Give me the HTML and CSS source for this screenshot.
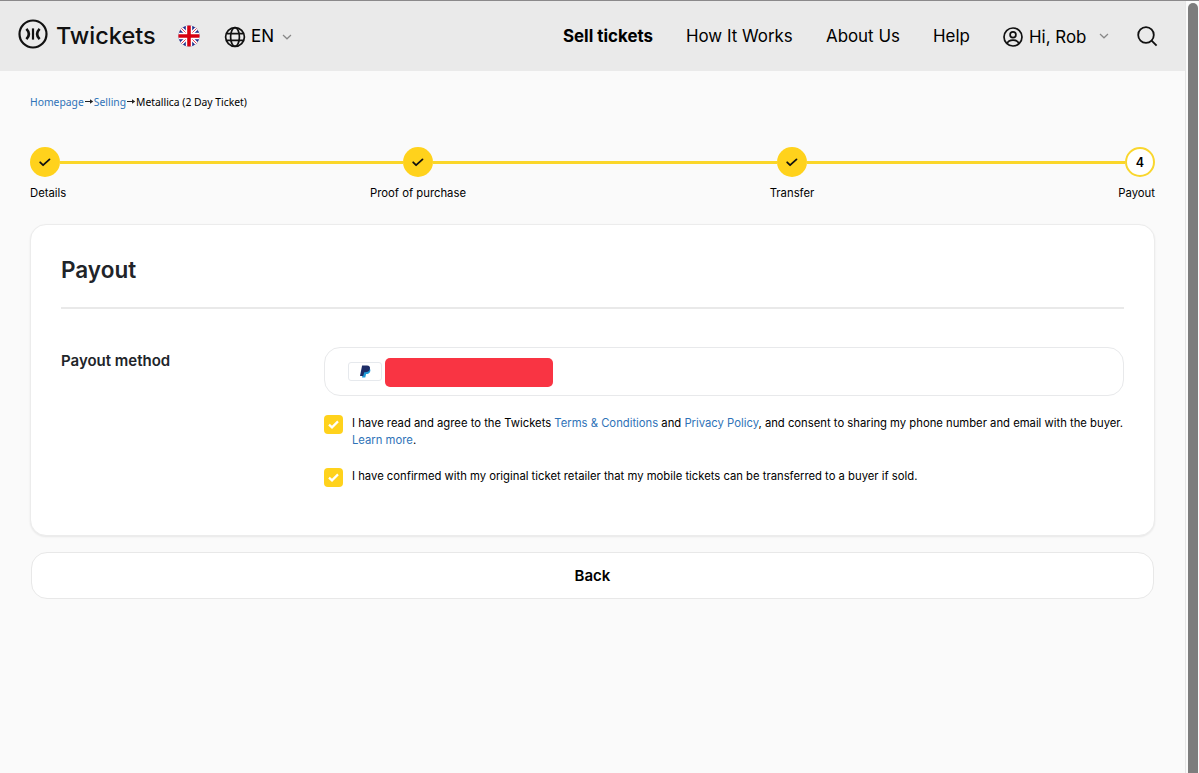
FILE: index.html
```html
<!DOCTYPE html>
<html lang="en">
<head>
  <meta charset="UTF-8" />
  <title>Payout - Twickets</title>
  <link rel="stylesheet" href="styles.css">
</head>
<body>
  <div class="page">
    <header class="header">
      <a class="logo" href="#">
        <svg width="30" height="30" viewBox="0 0 30 30" fill="none" stroke="#111" stroke-width="2.2">
          <circle cx="15" cy="15" r="13.5"/>
          <path d="M15 9.4v11.2"/>
          <path d="M8.4 9.8q5 5.2 0 10.4M21.6 9.8q-5 5.2 0 10.4" stroke-width="2.6"/>
        </svg>
        <span class="logo-text">Twickets</span>
      </a>
      <svg class="flag" width="22" height="22" viewBox="0 0 22 22">
        <clipPath id="round"><circle cx="11" cy="11" r="10.6"/></clipPath>
        <g clip-path="url(#round)">
          <path fill="#22308c" d="M0 0h22v22H0z"/>
          <path stroke="#fff" stroke-width="3.4" d="M0 0l22 22M22 0L0 22"/>
          <path stroke="#e0405a" stroke-width="1" d="M0 0l22 22M22 0L0 22"/>
          <path stroke="#fff" stroke-width="6.4" d="M11 0v22M0 11h22"/>
          <path stroke="#d80010" stroke-width="3.6" d="M11 0v22M0 11h22"/>
        </g>
      </svg>
      <div class="lang">
        <svg width="22" height="22" viewBox="0 0 22 22" fill="none" stroke="#111" stroke-width="1.7">
          <circle cx="11" cy="11" r="9.4"/>
          <ellipse cx="11" cy="11" rx="4.4" ry="9.4"/>
          <path d="M2.5 7.7h17M2.5 14.3h17"/>
        </svg>
        <span class="lang-text">EN</span>
        <svg width="10" height="6" viewBox="0 0 10 6" fill="none" stroke="#888" stroke-width="1.2"><path d="M1 1l4 3.8L9 1"/></svg>
      </div>
      <nav class="nav">
        <a class="sell" href="#">Sell tickets</a>
        <a class="how" href="#">How It Works</a>
        <a class="about" href="#">About Us</a>
        <a class="help" href="#">Help</a>
        <a class="user" href="#">
          <svg width="20" height="20" viewBox="0 0 20 20" fill="none" stroke="#111" stroke-width="1.7">
            <circle cx="10" cy="10" r="9"/>
            <circle cx="10" cy="7.7" r="2.9"/>
            <path d="M4.2 16.4c.8-2.5 2.4-3.3 5.8-3.3s5 .8 5.8 3.3"/>
          </svg>
          <span class="user-name">Hi, Rob</span>
          <svg class="caret" width="10" height="6" viewBox="0 0 10 6" fill="none" stroke="#888" stroke-width="1.2"><path d="M1 1l4 3.8L9 1"/></svg>
        </a>
        <svg class="search" width="21" height="21" viewBox="0 0 21 21" fill="none" stroke="#111" stroke-width="1.8">
          <circle cx="9" cy="9" r="7.8"/>
          <path d="M14.6 14.6l5 5"/>
        </svg>
      </nav>
    </header>

    <main class="content">
      <div class="breadcrumb"><a href="#">Homepage</a><svg width="10" height="7" viewBox="0 0 10 7"><path d="M1 3.5h6" stroke="#222"/><path d="M6 1.3l3.2 2.2L6 5.7z" fill="#222"/></svg><a href="#">Selling</a><svg width="10" height="7" viewBox="0 0 10 7"><path d="M1 3.5h6" stroke="#222"/><path d="M6 1.3l3.2 2.2L6 5.7z" fill="#222"/></svg><span>Metallica (2 Day Ticket)</span></div>

      <div class="steps">
        <div class="step first">
          <div class="dot"><svg width="14" height="12" viewBox="0 0 14 12" fill="none" stroke="#111" stroke-width="1.8" stroke-linecap="round" stroke-linejoin="round"><path d="M2.2 6.3l2.9 2.9 6.4-5.8"/></svg></div>
          <span class="step-label">Details</span>
        </div>
        <div class="line"></div>
        <div class="step">
          <div class="dot"><svg width="14" height="12" viewBox="0 0 14 12" fill="none" stroke="#111" stroke-width="1.8" stroke-linecap="round" stroke-linejoin="round"><path d="M2.2 6.3l2.9 2.9 6.4-5.8"/></svg></div>
          <span class="step-label">Proof of purchase</span>
        </div>
        <div class="line long"></div>
        <div class="step">
          <div class="dot"><svg width="14" height="12" viewBox="0 0 14 12" fill="none" stroke="#111" stroke-width="1.8" stroke-linecap="round" stroke-linejoin="round"><path d="M2.2 6.3l2.9 2.9 6.4-5.8"/></svg></div>
          <span class="step-label">Transfer</span>
        </div>
        <div class="line short"></div>
        <div class="step last">
          <div class="dot current">4</div>
          <span class="step-label">Payout</span>
        </div>
      </div>

      <section class="card">
        <h1>Payout</h1>
        <div class="row">
          <h2>Payout method</h2>
          <div class="fields">
            <div class="method">
              <div class="paypal">
                <svg width="11" height="13" viewBox="0 0 11 13">
                  <path fill="#1f9bd7" d="M3.5 3.2h5.8c1.3.9 1.3 2.3.8 3.6-.6 1.7-2 2.3-4 2.3l-.8 3.5H2z"/>
                  <path fill="#1d2c66" d="M2.1.5h4.9C9.4.5 10.4 1.8 9.9 4 9.4 6.2 7.6 7.3 5.2 7.3H4.2L3.2 11H0z"/>
                </svg>
              </div>
              <div class="redacted"></div>
            </div>
            <label class="check">
              <span class="box"><svg width="11" height="9" viewBox="0 0 11 9" fill="none" stroke="#fff" stroke-width="2.2"><path d="M1 4.6l3 2.8L10 1.4"/></svg></span>
              <span class="terms">I have read and agree to the Twickets <a href="#">Terms &amp; Conditions</a> and <a href="#">Privacy Policy</a>, and consent to sharing my phone number and email with the buyer.<br><a href="#">Learn more</a>.</span>
            </label>
            <label class="check">
              <span class="box"><svg width="11" height="9" viewBox="0 0 11 9" fill="none" stroke="#fff" stroke-width="2.2"><path d="M1 4.6l3 2.8L10 1.4"/></svg></span>
              <span class="terms">I have confirmed with my original ticket retailer that my mobile tickets can be transferred to a buyer if sold.</span>
            </label>
          </div>
        </div>
      </section>

      <button class="back">Back</button>
    </main>
  </div>
  <div class="scrollbar"><div class="thumb"></div></div>
</body>
</html>
```
FILE: styles.css
```css
* {
  box-sizing: border-box;
}
body {
  margin: 0;
  height: 773px;
  display: flex;
  overflow: hidden;
  font-family: Inter, sans-serif;
  color: #000;
  background: #fafafa;
  border-top: 1px solid #8b898b;
}
a {
  color: #2f73b8;
  text-decoration: none;
}
svg {
  flex: none;
  display: block;
}
.page {
  width: 1185px;
}
.header {
  height: 70px;
  padding: 0 27px 0 18px;
  display: flex;
  align-items: center;
  background: #eaeaea;
}
.logo {
  display: flex;
  align-items: center;
  gap: 8px;
  width: 160px;
  padding-bottom: 4px;
  color: #111;
}
.logo-text {
  padding-top: 4px;
  font-size: 23.5px;
  font-weight: 500;
  line-height: 30px;
}
.flag {
  margin-right: 24px;
}
.lang {
  display: flex;
  align-items: center;
  padding-top: 1px;
}
.lang-text {
  width: 24px;
  margin: -2px 7px 0 5px;
  font-size: 17px;
  line-height: 20px;
}
.nav {
  margin-left: auto;
  display: flex;
  align-items: center;
  font-size: 16.9px;
  line-height: 20px;
  white-space: nowrap;
}
.nav a {
  color: #000;
}
.nav .sell {
  width: 123px;
  font-weight: 700;
}
.how {
  width: 140px;
}
.about {
  width: 107px;
}
.help {
  width: 70px;
}
.user {
  display: flex;
  align-items: center;
  padding-top: 1px;
}
.user-name {
  width: 56px;
  margin: 0 14px 0 6px;
}
.caret {
  margin-top: -2px;
}
.search {
  margin-left: 28px;
}
.content {
  padding: 22px 30px 0;
}
.breadcrumb {
  display: flex;
  align-items: center;
  height: 17px;
  font-family: "Noto Sans", sans-serif;
  font-size: 10.35px;
}
.steps {
  display: flex;
  align-items: flex-start;
  margin-top: 37px;
  height: 77px;
}
.step {
  width: 30px;
  display: flex;
  flex-direction: column;
  align-items: center;
}
.step.first {
  align-items: flex-start;
}
.step.last {
  align-items: flex-end;
}
.dot {
  width: 30px;
  height: 30px;
  display: flex;
  align-items: center;
  justify-content: center;
  border-radius: 50%;
  background: #ffd21c;
}
.dot.current {
  background: #fff;
  border: 2px solid #f9d62e;
  font-size: 12.5px;
  font-weight: 600;
}
.step-label {
  margin-top: 8px;
  font-size: 11.3px;
  line-height: 16px;
  white-space: nowrap;
}
.line {
  flex: 343;
  height: 3px;
  margin-top: 14px;
  background: #fad629;
}
.line.long {
  flex: 344;
}
.line.short {
  flex: 318;
}
.card {
  height: 312px;
  padding: 31px 30px 0;
  background: #fff;
  border: 1px solid #ececec;
  border-radius: 16px;
  box-shadow: 0 1px 2px rgba(0, 0, 0, 0.08);
}
h1 {
  margin: 0;
  height: 53px;
  font-size: 22.5px;
  line-height: 28px;
  font-weight: 600;
  color: #212429;
  border-bottom: 2px solid #e9e9e9;
}
.row {
  display: flex;
  margin-top: 38px;
}
h2 {
  flex: none;
  width: 263px;
  margin: 4px 0 0;
  font-size: 15px;
  line-height: 20px;
  font-weight: 600;
  color: #212429;
}
.fields {
  flex: 1;
  min-width: 0;
}
.method {
  height: 49px;
  margin-bottom: 19px;
  padding-left: 23px;
  display: flex;
  align-items: center;
  gap: 3px;
  border: 1px solid #e8e9eb;
  border-radius: 16px;
}
.paypal {
  width: 34px;
  height: 19px;
  display: flex;
  align-items: center;
  justify-content: center;
  border: 1px solid #e6e9ed;
  border-radius: 3px;
}
.redacted {
  width: 168px;
  height: 29px;
  margin-top: 2px;
  border-radius: 5px;
  background: #f93443;
}
.check {
  display: flex;
  gap: 9px;
  margin-bottom: 19px;
}
.box {
  flex: none;
  width: 19px;
  height: 19px;
  display: flex;
  align-items: center;
  justify-content: center;
  border-radius: 4px;
  background: #ffd21c;
}
.terms {
  font-size: 11.27px;
  line-height: 17px;
  white-space: nowrap;
}
.back {
  display: block;
  width: 1123px;
  height: 47px;
  margin: 16px 0 0 1px;
  padding: 0;
  font-family: Inter, sans-serif;
  font-size: 15px;
  font-weight: 600;
  color: #000;
  background: #fff;
  border: 1px solid #e8e8e8;
  border-radius: 16px;
}
.scrollbar {
  width: 14px;
  padding: 2px 1px 0 2px;
  background: #fafafa;
  border-left: 1px solid #e6e6e6;
}
.thumb {
  width: 10px;
  height: 800px;
  border-radius: 5px;
  background: #7d7d7d;
}
```
